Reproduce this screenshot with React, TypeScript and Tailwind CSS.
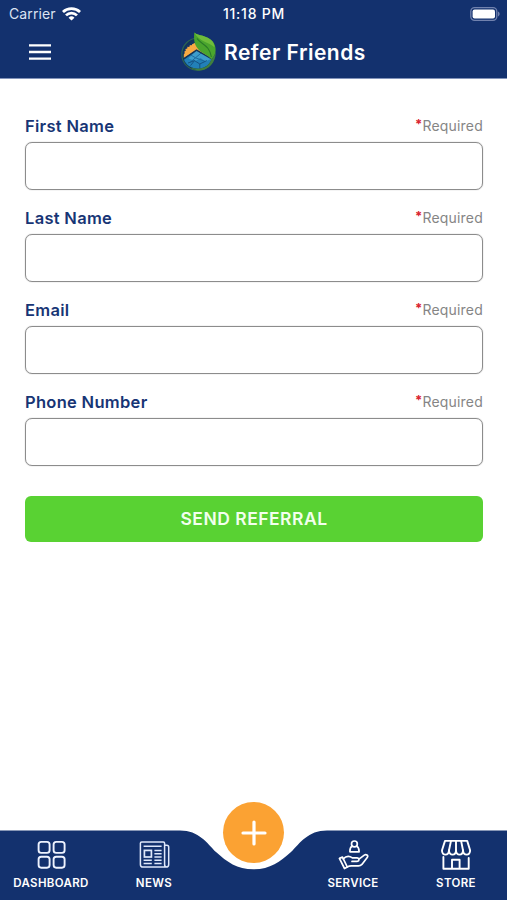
import { useState } from 'react';
import type { ReactNode } from 'react';

const fields = [
    { id: 'firstName', label: 'First Name', type: 'text' },
    { id: 'lastName', label: 'Last Name', type: 'text' },
    { id: 'email', label: 'Email', type: 'email' },
    { id: 'phone', label: 'Phone Number', type: 'tel' },
];

function WifiIcon() {
    return (
        <svg width="19" height="14" viewBox="0 0 18 14" preserveAspectRatio="none" fill="none" stroke="#fff" strokeWidth="2.6">
            <path d="M0.9 5a11.4 11.4 0 0 1 16.2 0" />
            <path d="M3.8 8.3a7.3 7.3 0 0 1 10.4 0" />
            <path d="M9 13.6L6.2 10.7a4 4 0 0 1 5.6 0z" fill="#fff" stroke="none" />
        </svg>
    );
}

function BatteryIcon() {
    return (
        <svg width="31" height="14" viewBox="0 0 31 14">
            <rect x="0.8" y="0.7" width="26" height="12.6" rx="3.8" fill="none" stroke="#7182ae" strokeWidth="1.3" />
            <rect x="2.6" y="2.4" width="22.4" height="9.2" rx="2" fill="#fff" />
            <path d="M28 4.6c2.2 0.8 2.2 4 0 4.8z" fill="#7182ae" />
        </svg>
    );
}

function Logo() {
    return (
        <svg width="38" height="40" viewBox="0 0 38 40">
            <circle cx="18" cy="22.2" r="16.2" fill="#12345f" stroke="#2d6550" strokeWidth="1.1" />
            <path d="M3.8 22.5l1.2-1.3-0.8-1.5 1.6-0.9-0.4-1.8 1.9-0.4 0.1-1.9 1.9 0.2 0.6-1.8 1.8 0.5 1-1.6 3.5 0.8L30.5 22 17 18z" fill="#f8aa43" />
            <path d="M3.8 22.5L12.7 12l4-2L31 22l-3 3-11.5-7-12.7 8z" fill="#f8aa43" />
            <path d="M3.8 27.2L16.5 18.2l15.3 8.6c-1.8 5.6-6.6 9.6-13.3 9.9-7-0.1-12.4-3.4-14.7-9.5z" fill="#2280b8" />
            <path d="M16.5 18.4l15 8.4-6 2.6-5-3.3-5 3-7-2.6z" fill="#3d9dcb" />
            <path d="M10.2 22.6l5.3 3.2 5.4-4.6M15.5 25.8l-5.2 4.4M15.5 25.8l9.6 3.6" fill="none" stroke="#1a659b" strokeWidth="0.9" />
            <path d="M3.5 27.2L16.5 18.2l15.3 8.6" fill="none" stroke="#153557" strokeWidth="1.5" />
            <path d="M8 31l6.5-2.4 5.3 3.4 7-3.4M14.5 28.6l-4 5M19.8 32v4" fill="none" stroke="#155283" strokeWidth="1" />
            <path d="M14.3 0.5C18 4 27 3.1 32.4 9.2c4.7 5 4.2 13.5-1 18C25 20 12 20 14.3 0.5z" fill="#4aa52d" />
            <path d="M14.3 0.5C18 4 27 3.1 32.4 9.2c1.5 2 2 4 2.1 6C28.5 10 19.5 10 14.3 0.5z" fill="#6ebc3b" />
            <path d="M17 6.5C21 12.6 29.5 12.6 31.4 25" fill="none" stroke="#2a7a28" strokeWidth="1.1" />
            <path d="M31.2 27.2C35 25 36.3 19.8 35.3 14c2 10-1.5 19.2-9.2 22.8-5.6 2.8-11.5 1.7-15.6-1.2 10 3 19-0.7 20.7-8.4z" fill="#3f7f3f" />
        </svg>
    );
}

function DashboardIcon() {
    return (
        <svg width="32" height="32" viewBox="0 0 32 32" fill="none" stroke="#eef3ff" strokeWidth="1.9">
            <rect x="3.6" y="2.9" width="11" height="11" rx="2.6" />
            <rect x="18.6" y="2.9" width="11" height="11" rx="2.6" />
            <rect x="3.6" y="17.7" width="11" height="11" rx="2.6" />
            <rect x="18.6" y="17.7" width="11" height="11" rx="2.6" />
        </svg>
    );
}

function NewsIcon() {
    return (
        <svg width="32" height="32" viewBox="0 0 32 32" fill="none" stroke="#dfe8fb" strokeWidth="1.5">
            <path d="M26.6 6.2h2.2q1.9 0 1.9 1.9V25.4q0 2.7-2.7 2.7H5q-2.6 0-2.6-2.6V4.3q0-1.3 1.3-1.3h21.6q1.3 0 1.3 1.3v21.3q0 2.4 2 2.4" />
            <path d="M5.6 7.3h18M16.4 11.4h7.2M16.4 14.7h7.2M16.4 18h7.2M5.6 21.3h8.2M16.4 21.3h7.2M5.6 24.6h8.2M16.4 24.6h7.2" />
            <rect x="6.4" y="11.4" width="7" height="6.6" strokeWidth="1.7" />
        </svg>
    );
}

function ServiceIcon() {
    return (
        <svg width="32" height="32" viewBox="0 0 32 32" fill="none" stroke="#fff" strokeWidth="1.7" strokeLinecap="round" strokeLinejoin="round">
            <circle cx="17.4" cy="4.9" r="2.9" />
            <path d="M15.2 7.1c-1.7 1-2.4 3-2.3 5.7h9.2c0-2.7-0.8-4.7-2.5-5.7" />
            <path d="M2.4 19.4l3.1-1.3 4.8 9.9-2.8 1.5z" />
            <path d="M6.2 19.8c3-3.1 6.6-2.9 9.2-0.9h4.7c2.6 0.3 2.4 3.3 0 3.5h-5.1M22 20.2l5.3-4.1c1.9-1.2 4.1 0.3 3.1 2.1l-5.5 7.2c-1 1.1-2.1 1.5-3.5 1.5h-7.2c-1.8 0-2.7 0.4-4.1 1.1" />
        </svg>
    );
}

function StoreIcon() {
    return (
        <svg width="32" height="32" viewBox="0 0 32 32" fill="none" stroke="#fff" strokeWidth="1.9" strokeLinecap="round" strokeLinejoin="round">
            <path d="M5 1.9h22.2l2.9 9.3c0.3 5.9-6.8 5.9-7.1 0 0 5.9-7 5.9-7 0 0 5.9-7 5.9-7 0-0.3 5.9-7.3 5.9-7 0z" />
            <path d="M11 1.9L9 11.2M16 1.9V11.2M21.1 1.9L23 11.2" />
            <path d="M3.4 18v11.7h25.3V19M12 29.7v-9h7.6v9" />
        </svg>
    );
}

function NavItem({ label, children }: { label: string; children: ReactNode }) {
    return (
        <a href="#" className="flex flex-col items-center pt-[9px]">
            {children}
            <span className="mt-1 text-[11.5px] leading-4 font-semibold whitespace-nowrap tracking-[0.35px]">{label}</span>
        </a>
    );
}

export default function App() {
    const [values, setValues] = useState<Record<string, string>>({});

    return (
        <div className="flex flex-col h-[900px] w-[507px] overflow-hidden bg-white font-['Inter',sans-serif]">
            <header className="h-[79px] shrink-0 bg-[#13316e] text-white border-b border-[#8293ba]">
                <div className="grid grid-cols-3 items-center h-[27px] pl-[9px] pr-[6px] text-[14px]">
                    <div className="flex items-center gap-[6px] text-[#dce3f2]">
                        <span className="tracking-[0.1px]">Carrier</span>
                        <WifiIcon />
                    </div>
                    <span className="pr-[2px] text-center font-medium tracking-[0.75px] whitespace-nowrap">11:18 PM</span>
                    <div className="flex justify-end">
                        <BatteryIcon />
                    </div>
                </div>
                <div className="flex items-center h-[50px] pl-[29px]">
                    <button aria-label="Menu">
                        <svg width="22" height="16" viewBox="0 0 22 16" stroke="#fff" strokeWidth="2.3">
                            <path d="M0 1.4h22M0 8h22M0 14.6h22" />
                        </svg>
                    </button>
                    <div className="flex items-center ml-[129px] gap-[6px]">
                        <Logo />
                        <h1 className="pt-px text-[21px] leading-6 font-semibold tracking-[0.5px] whitespace-nowrap">Refer Friends</h1>
                    </div>
                </div>
            </header>

            <main className="flex-1 pl-[25px] pr-[24px] pt-[37px]">
                <form onSubmit={e => e.preventDefault()}>
                    {fields.map(field => (
                        <div key={field.id} className="h-[92px]">
                            <div className="flex items-center justify-between h-[26px] pb-[6px]">
                                <label htmlFor={field.id} className="text-[16.5px] leading-5 font-semibold text-[#173575] tracking-[0.3px]">
                                    {field.label}
                                </label>
                                <span className="flex text-[14px] leading-5 text-[#858585] tracking-[0.2px]">
                                    <span className="leading-[17px] text-[#d9222f] font-bold text-[13px]">*</span>Required
                                </span>
                            </div>
                            <input
                                id={field.id}
                                type={field.type}
                                value={values[field.id] ?? ''}
                                onChange={e => setValues({ ...values, [field.id]: e.target.value })}
                                className="block w-full h-[48px] px-3 rounded-[7px] border border-[#8c8c8c] shadow-[0_0_1px_#8c8c8c] outline-none"
                            />
                        </div>
                    ))}
                    <button className="mt-[12px] w-full h-[46px] rounded-[6px] bg-[#59d233] text-[#f2ffed] text-[17.5px] font-semibold tracking-[0.5px]">
                        SEND REFERRAL
                    </button>
                </form>
            </main>

            <nav className="relative h-[70px] shrink-0 text-white">
                <svg className="absolute inset-0" width="507" height="70" viewBox="0 0 507 70">
                    <path d="M0 0.4H180C199 0.4 207 13 216 22C227 32 237 39.3 253.5 39.3S280 32 291 22C300 13 308 0.4 327 0.4H507V70H0z" fill="#13316e" />
                </svg>
                <button className="absolute left-[223px] -top-[28px] flex items-center justify-center size-[61px] rounded-full bg-[#fba233]" aria-label="Add">
                    <svg width="26" height="26" viewBox="0 0 26 26" stroke="#fff" strokeWidth="3.2" strokeLinecap="round">
                        <path d="M13 2v22M2 13h22" />
                    </svg>
                </button>
                <div className="relative grid grid-cols-[102px_104px_1fr_104px_102px] pointer-events-none">
                    <NavItem label="DASHBOARD"><DashboardIcon /></NavItem>
                    <NavItem label="NEWS"><NewsIcon /></NavItem>
                    <span />
                    <NavItem label="SERVICE"><ServiceIcon /></NavItem>
                    <NavItem label="STORE"><StoreIcon /></NavItem>
                </div>
            </nav>
        </div>
    );
}
